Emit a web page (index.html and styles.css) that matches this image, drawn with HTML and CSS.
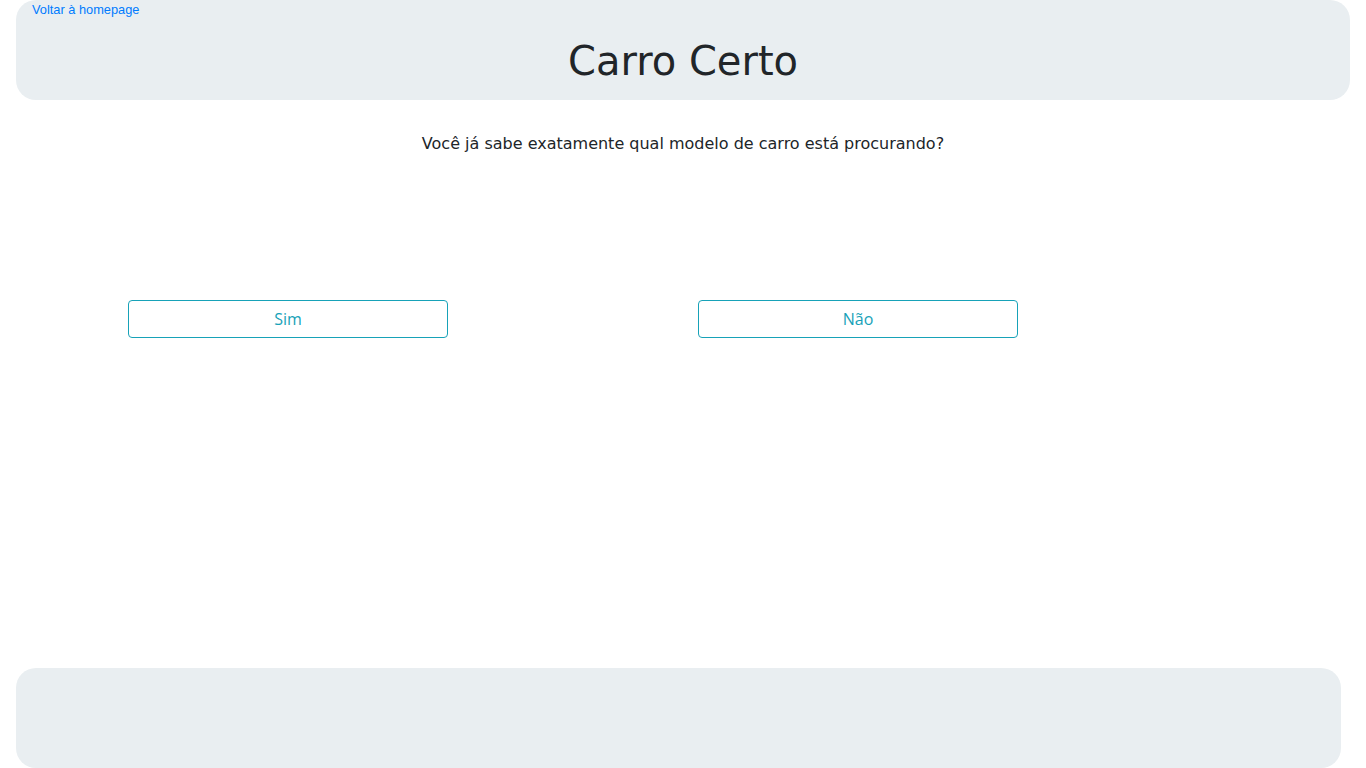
FILE: index.html
```html
<!DOCTYPE html>
<html lang="pt-BR">
<head>
<meta charset="utf-8">
<title>Carro Certo</title>
<link rel="stylesheet" href="styles.css">
</head>
<body>
<div class="page">
  <header class="site-header">
    <a class="home-link" href="#">Voltar à homepage</a>
    <h1 class="title">Carro Certo</h1>
  </header>
  <main class="main">
    <p class="question">Você já sabe exatamente qual modelo de carro está procurando?</p>
    <div class="container">
      <div class="choices">
        <div class="col"><button class="btn-choice" type="button">Sim</button></div>
        <div class="col"><button class="btn-choice" type="button">Não</button></div>
      </div>
    </div>
  </main>
  <footer class="site-footer"></footer>
</div>
</body>
</html>
```
FILE: styles.css
```css
* { box-sizing: border-box; }
html, body { margin: 0; padding: 0; }
body {
  font-family: "DejaVu Sans", sans-serif;
  color: #212529;
  background: #fff;
}
.page {
  min-height: 100vh;
  display: flex;
  flex-direction: column;
}
.site-header {
  margin: 0 16px;
  height: 100px;
  background: #e9eef1;
  border-radius: 20px;
  padding: 0 16px;
}
.home-link {
  display: block;
  font-family: "Liberation Sans", Arial, sans-serif;
  font-size: 12.8px;
  line-height: 20px;
  color: #007bff;
  text-decoration: none;
  width: max-content;
}
.title {
  margin: 17px 0 0;
  font-size: 40px;
  font-weight: 400;
  line-height: 48px;
  text-align: center;
}
.main {
  flex: 1;
}
.question {
  margin: 32px 0 0;
  font-size: 16px;
  line-height: 24px;
  text-align: center;
}
.container {
  width: 1140px;
  margin: 144px auto 0;
  padding: 0 15px;
}
.choices {
  display: grid;
  grid-template-columns: 1fr 1fr;
  column-gap: 30px;
}
.btn-choice {
  width: 320px;
  height: 38px;
  padding: 6px 12px;
  font-family: "Open Sans", "Noto Sans", sans-serif;
  font-size: 16px;
  line-height: 24px;
  color: #17a2b8;
  background: #fff;
  border: 1px solid #17a2b8;
  border-radius: 4px;
  cursor: pointer;
}
.site-footer {
  margin: 0 25px 0 16px;
  height: 100px;
  background: #e9eef1;
  border-radius: 20px;
}
```
